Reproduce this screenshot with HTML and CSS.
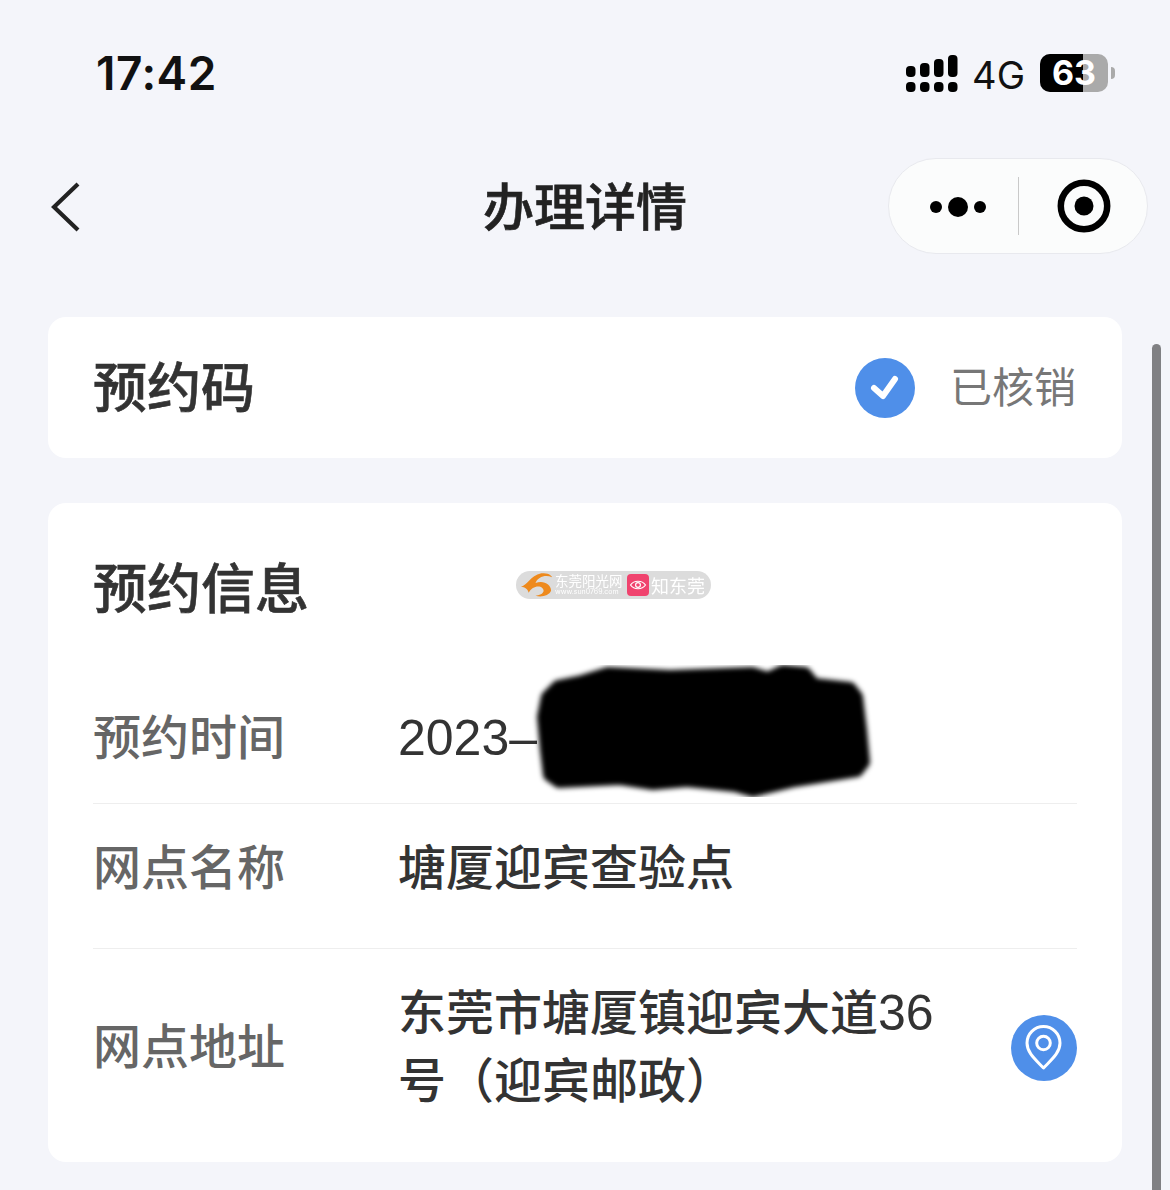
FILE: index.html
```html
<!DOCTYPE html>
<html lang="zh-CN">
<head>
	<meta charset="UTF-8">
	<title>办理详情</title>
	<link rel="stylesheet" href="styles.css">
</head>
<body>
	<div class="page">
		<div class="status-bar">
			<div class="status-time">17:42</div>
			<div class="status-right">
				<svg class="signal" width="52" height="38" viewBox="0 0 52 38">
					<rect x="0" y="12" width="9.5" height="11" rx="4"/>
					<rect x="14" y="9" width="9.5" height="14" rx="4"/>
					<rect x="28" y="5" width="9.5" height="18" rx="4"/>
					<rect x="42" y="1" width="9.5" height="22" rx="4"/>
					<rect x="0" y="28" width="9.5" height="10" rx="4"/>
					<rect x="14" y="28" width="9.5" height="10" rx="4"/>
					<rect x="28" y="28" width="9.5" height="10" rx="4"/>
					<rect x="42" y="28" width="9.5" height="10" rx="4"/>
				</svg>
				<span class="net">4G</span>
				<div class="battery">
					<div class="battery-body">
						<div class="battery-fill"></div>
						<span class="battery-num">63</span>
					</div>
					<div class="battery-tip"></div>
				</div>
			</div>
		</div>

		<div class="nav">
			<svg class="nav-back" width="30" height="50" viewBox="0 0 30 50">
				<path d="M27 2 L3 25 L27 48" fill="none" stroke="#222" stroke-width="4.2"/>
			</svg>
			<div class="nav-title">办理详情</div>
			<div class="capsule">
				<svg class="capsule-more" width="58" height="22" viewBox="0 0 58 22">
					<circle cx="7" cy="11" r="6"/>
					<circle cx="29" cy="11" r="10"/>
					<circle cx="51" cy="11" r="6"/>
				</svg>
				<div class="capsule-line"></div>
				<svg class="capsule-close" width="54" height="54" viewBox="0 0 54 54">
					<circle cx="27" cy="27" r="23.2" fill="none" stroke="#000" stroke-width="6.5"/>
					<circle cx="27" cy="27" r="9.5"/>
				</svg>
			</div>
		</div>

		<div class="content">
			<div class="card card-code">
				<div class="card-title code-title">预约码</div>
				<div class="code-state">
					<svg width="60" height="60" viewBox="0 0 60 60">
						<circle cx="30" cy="30" r="30" fill="#4f8fe9"/>
						<path d="M19 30 L28 38 L40 21" fill="none" stroke="#fff" stroke-width="6" stroke-linecap="round" stroke-linejoin="round"/>
					</svg>
					<span class="code-text">已核销</span>
				</div>
			</div>

			<div class="card card-info">
				<div class="card-title info-title">预约信息</div>
				<div class="row row-first">
					<div class="row-label">预约时间</div>
					<div class="row-value"><span class="num">2023–</span></div>
				</div>
				<div class="row">
					<div class="row-label">网点名称</div>
					<div class="row-value">塘厦迎宾查验点</div>
				</div>
				<div class="row row-last">
					<div class="row-label">网点地址</div>
					<div class="row-value">东莞市塘厦镇迎宾大道<span class="num">36</span>号（迎宾邮政）</div>
					<svg class="row-pin" width="66" height="66" viewBox="0 0 66 66">
						<circle cx="33" cy="33" r="33" fill="#4f8fe9"/>
						<path d="M32.5 53 C25 45 16 38 16 28 A16.5 16.5 0 0 1 49 28 C49 38 40 45 32.5 53 Z" fill="none" stroke="#fff" stroke-width="3" stroke-linejoin="round"/>
						<circle cx="32.5" cy="28" r="6.8" fill="none" stroke="#fff" stroke-width="3"/>
					</svg>
				</div>
			</div>
		</div>

		<!-- 水印 -->
		<div class="watermark">
			<svg width="33" height="26" viewBox="0 0 34 26">
				<path d="M1 15 C8 13 10 4 22 1 C30 0 33 4 33 5 C26 2 18 5 16 11 C24 8 32 12 32 19 C30 24 22 26 16 24 C24 23 26 19 23 16 C19 13 12 15 9 21 C8 17 5 15 1 15 Z" fill="#ee8a1d"/>
			</svg>
			<div class="wm-site">
				<span class="wm-name">东莞阳光网</span>
				<span class="wm-url">www.sun0769.com</span>
			</div>
			<svg class="wm-eye" width="22" height="22" viewBox="0 0 22 22">
				<rect width="22" height="22" rx="4" fill="#f0436e"/>
				<path d="M3.5 11 C7 6 15 6 18.5 11 C15 16 7 16 3.5 11 Z" fill="none" stroke="#fff" stroke-width="1.2"/>
				<circle cx="11" cy="11" r="2.4" fill="none" stroke="#fff" stroke-width="1.2"/>
			</svg>
			<span class="wm-app">知东莞</span>
		</div>

		<!-- 涂黑 -->
		<svg class="redact" width="360" height="150" viewBox="530 658 360 150">
			<defs>
				<filter id="soft" x="-5%" y="-5%" width="110%" height="110%">
					<feGaussianBlur stdDeviation="2.5"/>
				</filter>
			</defs>
			<path filter="url(#soft)" fill="#000" stroke="#000" stroke-width="12" stroke-linejoin="round" d="M543 717 L547 697 L558 686 L582 681 L608 673 L670 676 L752 673 L768 678 L783 671 L805 673 L814 684 L850 688 L857 697 L861 730 L864 762 L857 771 L795 781 L753 791 L735 786 L687 781 L653 784 L620 779 L559 782 L549 775 L546 750 Z"/>
		</svg>

		<div class="scrollbar"></div>
	</div>
</body>
</html>
```

FILE: styles.css
```css
html, body {
	margin: 0;
	padding: 0;
}
body {
	background-color: #f4f5fa;
	font-family: Inter, "Noto Sans CJK SC", sans-serif;
	color: #333;
}
.page {
	position: relative;
	width: 1170px;
	height: 1190px;
	overflow: hidden;
}

/* 状态栏 */
.status-bar {
	display: flex;
	justify-content: space-between;
	align-items: center;
	box-sizing: border-box;
	height: 146px;
	padding: 0 55px 0 96px;
}
.status-time {
	font-size: 46px;
	font-weight: 600;
	letter-spacing: 0.5px;
	color: #111;
}
.status-right {
	display: flex;
	align-items: center;
}
.signal {
	margin-right: 14px;
}
.net {
	margin: 4px 15px 0 0;
	font-size: 38px;
	color: #111;
}
.battery {
	display: flex;
	align-items: center;
}
.battery-body {
	position: relative;
	display: flex;
	justify-content: center;
	width: 68px;
	height: 38px;
	border-radius: 10px;
	line-height: 38px;
	background-color: #aaa;
}
.battery-fill {
	position: absolute;
	left: 0;
	top: 0;
	width: 43px;
	height: 100%;
	border-radius: 10px 0 0 10px;
	background-color: #000;
}
.battery-num {
	position: relative;
	font-size: 34px;
	font-weight: 700;
	color: #fff;
}
.battery-tip {
	width: 4px;
	height: 12px;
	margin-left: 3px;
	border-radius: 0 6px 6px 0;
	background-color: #aaa;
}

/* 导航 */
.nav {
	display: flex;
	justify-content: space-between;
	align-items: center;
	position: relative;
	box-sizing: border-box;
	height: 122px;
	padding: 0 22px 0 51px;
}
.nav-title {
	position: absolute;
	left: 0;
	right: 0;
	margin-bottom: 6px;
	text-align: center;
	font-size: 51px;
	font-weight: 500;
	-webkit-text-stroke: 0.6px #222;
	color: #222;
}
.capsule {
	display: flex;
	align-items: center;
	box-sizing: border-box;
	width: 260px;
	height: 96px;
	margin-bottom: 2px;
	padding-left: 40px;
	border: 1px solid #e8e9ee;
	border-radius: 48px;
	background-color: #fbfcfc;
}
.capsule-more {
	margin-top: 2px;
}
.capsule-line {
	width: 1px;
	height: 58px;
	margin: 0 38px 0 31px;
	background-color: #c9c9c9;
}

/* 内容 */
.content {
	display: flex;
	flex-direction: column;
	gap: 45px;
	width: 1074px;
	margin-left: 48px;
	padding-top: 49px;
}
.card {
	box-sizing: border-box;
	padding: 0 46px 0 45px;
	border-radius: 18px;
	background-color: #fff;
}
.card-code {
	display: flex;
	justify-content: space-between;
	align-items: center;
	height: 141px;
}
.card-title {
	font-size: 54px;
	font-weight: 500;
	-webkit-text-stroke: 0.6px #333;
	color: #333;
}
.code-title {
	margin-bottom: 6px;
}
.code-state {
	display: flex;
	align-items: center;
	gap: 35px;
}
.code-text {
	margin-bottom: 6px;
	font-size: 42px;
	color: #777;
}
.card-info {
	height: 659px;
	padding: 0 45px;
}
.info-title {
	height: 171px;
	line-height: 174px;
}
.row {
	display: flex;
	align-items: center;
	padding: 30px 0 46px;
	border-bottom: 1px solid #eee;
	font-size: 48px;
	font-weight: 500;
	line-height: 68px;
}
.row-first {
	padding-bottom: 31px;
}
.row-last {
	padding-bottom: 47px;
	border-bottom: 0;
}
.row-label {
	flex: none;
	width: 305px;
	color: #666;
}
.row-value {
	flex: 1;
	color: #333;
}
.num {
	font-family: "Liberation Sans", sans-serif;
	font-size: 50px;
	font-weight: 400;
}
.row-pin {
	flex: none;
	margin: 2px 0 0 70px;
}

/* 水印 */
.watermark {
	position: absolute;
	left: 516px;
	top: 571px;
	display: flex;
	align-items: center;
	box-sizing: border-box;
	width: 195px;
	height: 28px;
	padding-left: 4px;
	border-radius: 14px;
	background-color: #dcdcdc;
	filter: blur(0.5px);
}
.wm-site {
	display: flex;
	flex-direction: column;
	width: 68px;
	margin-left: 2px;
	color: #fff;
	line-height: 1;
}
.wm-name {
	font-size: 13.5px;
}
.wm-url {
	font-size: 7px;
}
.wm-eye {
	margin-left: 4px;
}
.wm-app {
	margin-left: 2px;
	font-size: 18px;
	color: #fff;
}

/* 涂黑 */
.redact {
	position: absolute;
	left: 530px;
	top: 658px;
}

.scrollbar {
	position: absolute;
	left: 1152px;
	top: 344px;
	width: 9px;
	height: 860px;
	border-radius: 5px;
	background-color: #808083;
}
```
